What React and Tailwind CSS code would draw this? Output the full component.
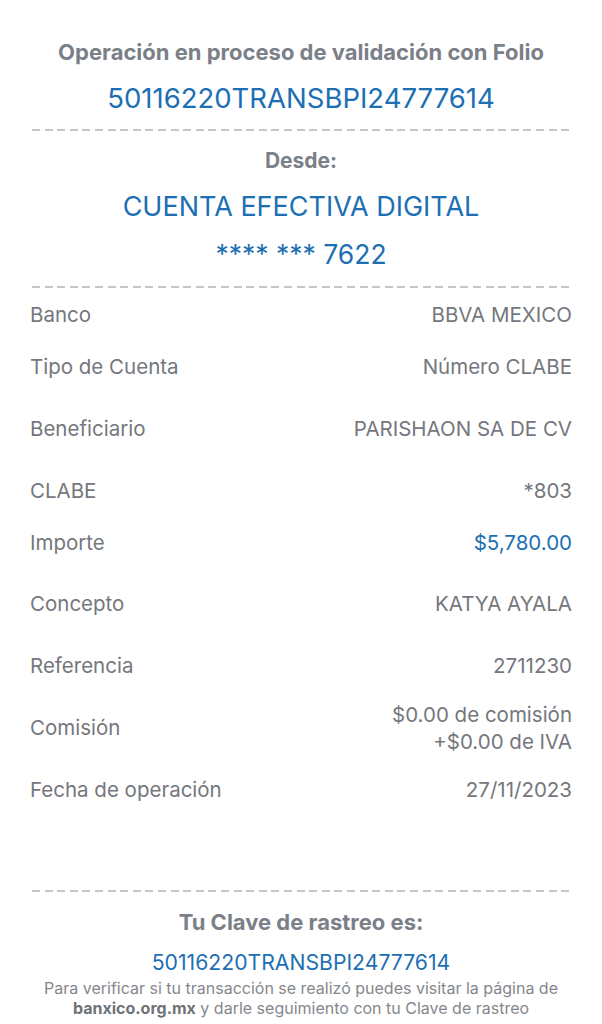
import React from "react";

const ROWS = [
  { label: "Banco", value: "BBVA MEXICO", gap: "mt-[7px]" },
  { label: "Tipo de Cuenta", value: "Número CLABE", gap: "mt-[12px]" },
  { label: "Beneficiario", value: "PARISHAON SA DE CV", gap: "mt-[22px]" },
  { label: "CLABE", value: "*803", gap: "mt-[22px]" },
  { label: "Importe", value: "$5,780.00", gap: "mt-[12px]", blue: true },
  { label: "Concepto", value: "KATYA AYALA", gap: "mt-[21px]" },
  { label: "Referencia", value: "2711230", gap: "mt-[22px]" },
  { label: "Comisión", value: ["$0.00 de comisión", "+$0.00 de IVA"], gap: "mt-[22px]" },
  { label: "Fecha de operación", value: "27/11/2023", gap: "mt-[22px]" },
];

function Dashed() {
  return (
    <div className="mx-[32px] h-[2px] bg-[repeating-linear-gradient(to_right,#c4c6ca_0px,#c4c6ca_8px,transparent_8px,transparent_12.6px)]" />
  );
}

function Row({ label, value, gap, blue }) {
  const multi = Array.isArray(value);
  return (
    <div className={`${gap} flex h-[40px] items-center justify-between px-[30px]`}>
      <span className="text-[20.5px] text-[#75777d]">{label}</span>
      {multi ? (
        <div className="flex flex-col items-end text-[20.5px] leading-[27px] text-[#75777d]">
          {value.map((v) => (
            <span key={v}>{v}</span>
          ))}
        </div>
      ) : (
        <span className={`text-[20.5px] ${blue ? "text-[#1d6fb3]" : "text-[#75777d]"}`}>{value}</span>
      )}
    </div>
  );
}

export default function App() {
  return (
    <div className="w-[602px] h-[1024px] overflow-hidden bg-white font-['Inter',sans-serif]">
      <div className="flex flex-col items-center pt-[38px]">
        <p className="text-[22px] leading-[28px] font-bold text-[#7b7f87]">
          Operación en proceso de validación con Folio
        </p>
        <p className="mt-[15px] text-[27.5px] leading-[34px] text-[#1d6fb3]">
          50116220TRANSBPI24777614
        </p>
      </div>
      <div className="mt-[14px]">
        <Dashed />
      </div>
      <div className="flex flex-col items-center">
        <p className="mt-[17px] text-[21px] leading-[26px] font-bold text-[#7b7f87]">Desde:</p>
        <p className="mt-[15px] text-[27px] leading-[36px] text-[#1d6fb3]">CUENTA EFECTIVA DIGITAL</p>
        <p className="mt-[11px] text-[26.5px] leading-[36px] text-[#1d6fb3]">**** *** 7622</p>
      </div>
      <div className="mt-[14px]">
        <Dashed />
      </div>
      <div className="flex flex-col">
        {ROWS.map((r) => (
          <Row key={r.label} {...r} />
        ))}
      </div>
      <div className="mt-[80px]">
        <Dashed />
      </div>
      <div className="flex flex-col items-center text-center">
        <p className="mt-[16px] text-[22px] leading-[28px] font-bold text-[#7b7f87]">Tu Clave de rastreo es:</p>
        <p className="mt-[12px] text-[21.2px] leading-[28px] text-[#1d6fb3]">50116220TRANSBPI24777614</p>
        <p className="mt-[2px] text-[16px] leading-[20px] text-[#85878c]">
          Para verificar si tu transacción se realizó puedes visitar la página de
          <br />
          <span className="font-bold text-[#6f7278]">banxico.org.mx</span> y darle seguimiento con tu Clave de rastreo
        </p>
      </div>
    </div>
  );
}
